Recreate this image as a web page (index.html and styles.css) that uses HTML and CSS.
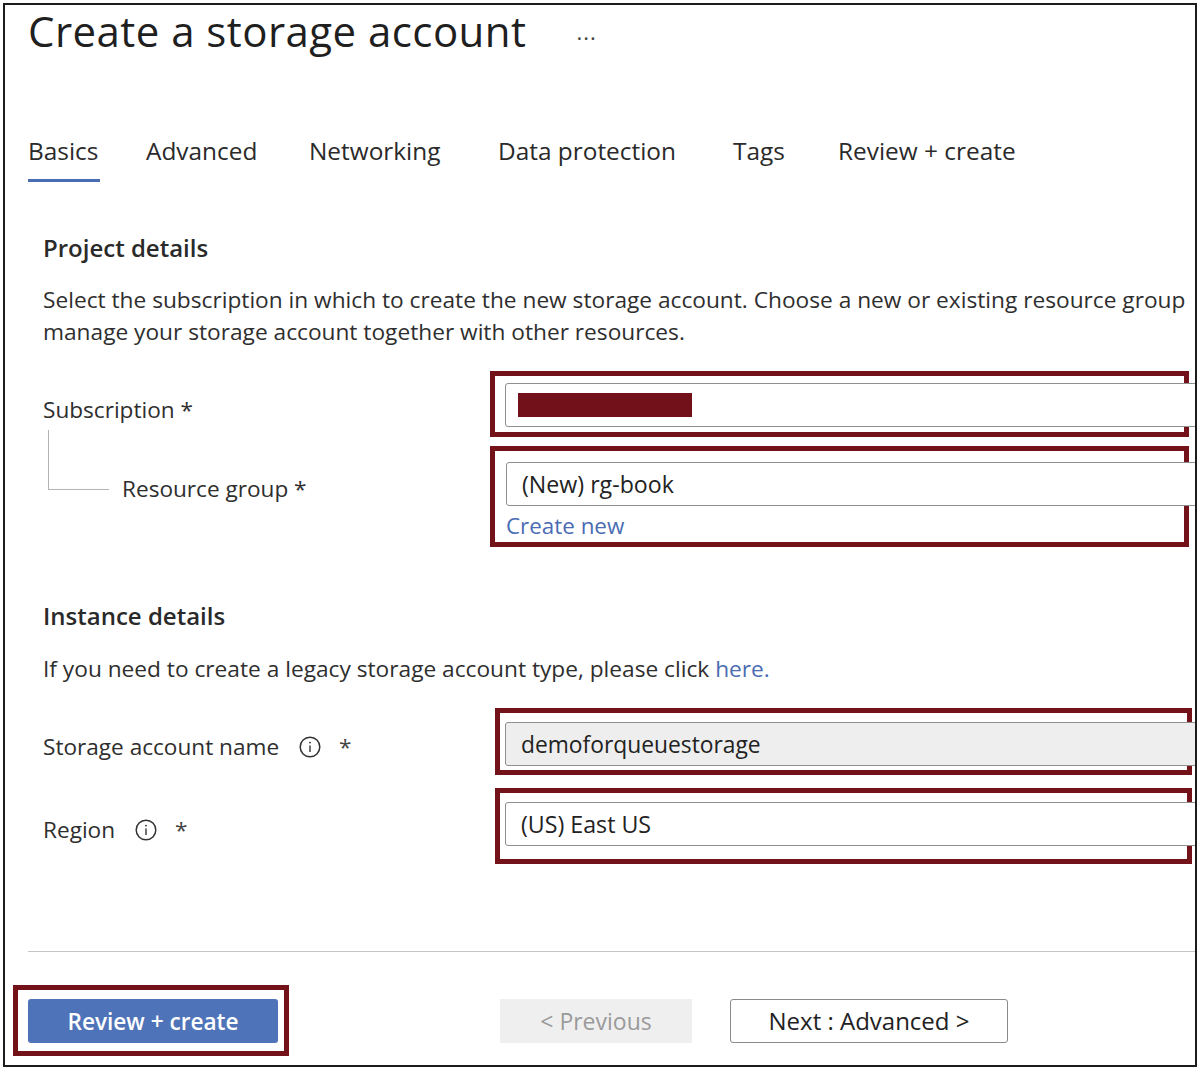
FILE: index.html
```html
<!DOCTYPE html>
<html lang="en">
<head>
<meta charset="utf-8">
<title>Create a storage account</title>
<link rel="stylesheet" href="styles.css">
</head>
<body>
<div class="frame">
  <header class="title-row">
    <h1 class="title">Create a storage account</h1>
    <span class="more">···</span>
  </header>

  <nav class="tabs">
    <span class="tab active"><span class="tab-text">Basics</span></span>
    <span class="tab"><span class="tab-text">Advanced</span></span>
    <span class="tab"><span class="tab-text">Networking</span></span>
    <span class="tab"><span class="tab-text">Data protection</span></span>
    <span class="tab"><span class="tab-text">Tags</span></span>
    <span class="tab"><span class="tab-text">Review + create</span></span>
  </nav>

  <section class="section">
    <h2 class="heading heading-project">Project details</h2>
    <p class="desc">Select the subscription in which to create the new storage account. Choose a new or existing resource group<br>manage your storage account together with other resources.</p>

    <div class="row row-sub">
      <div class="label label-sub">Subscription *</div>
      <div class="hl hl-sub">
        <div class="input"><span class="redact"></span></div>
      </div>
    </div>

    <div class="row row-rg">
      <div class="label label-rg"><span class="connector"></span>Resource group *</div>
      <div class="hl hl-rg">
        <div class="input"><span class="value">(New) rg-book</span></div>
        <a class="link create-new">Create new</a>
      </div>
    </div>

    <h2 class="heading heading-instance">Instance details</h2>
    <p class="desc desc-instance">If you need to create a legacy storage account type, please click <a class="link">here.</a></p>

    <div class="row row-name">
      <div class="label label-name">Storage account name<svg class="info" viewBox="0 0 22 22" width="22" height="22" aria-hidden="true"><circle cx="11" cy="11" r="9.8" fill="none" stroke="#333" stroke-width="1.5"/><line x1="11" y1="9.5" x2="11" y2="16" stroke="#333" stroke-width="1.4"/><circle cx="11" cy="6.6" r="0.95" fill="#333"/></svg><span class="req">*</span></div>
      <div class="hl hl-name">
        <div class="input input-disabled"><span class="value">demoforqueuestorage</span></div>
      </div>
    </div>

    <div class="row row-region">
      <div class="label label-region">Region<svg class="info" viewBox="0 0 22 22" width="22" height="22" aria-hidden="true"><circle cx="11" cy="11" r="9.8" fill="none" stroke="#333" stroke-width="1.5"/><line x1="11" y1="9.5" x2="11" y2="16" stroke="#333" stroke-width="1.4"/><circle cx="11" cy="6.6" r="0.95" fill="#333"/></svg><span class="req">*</span></div>
      <div class="hl hl-region">
        <div class="input"><span class="value">(US) East US</span></div>
      </div>
    </div>
  </section>

  <footer class="footer">
    <div class="divider"></div>
    <div class="actions">
      <div class="hl-btn"><button class="btn btn-primary">Review + create</button></div>
      <button class="btn btn-disabled">&lt; Previous</button>
      <button class="btn btn-secondary">Next : Advanced &gt;</button>
    </div>
  </footer>
</div>
</body>
</html>
```

FILE: styles.css
```css
* { box-sizing: border-box; }

html, body {
  margin: 0;
  padding: 0;
  background: #ffffff;
}

body {
  font-family: "Open Sans", "Noto Sans", "DejaVu Sans", sans-serif;
  color: #262626;
}

.frame {
  margin: 3px 0 0 3px;
  width: 1194px;
  height: 1064px;
  border: 2px solid #1c1c1c;
  overflow: hidden;
  background: #fff;
}

/* Title */
.title-row {
  display: flex;
  align-items: flex-start;
  padding: 1px 0 0 23px;
  height: 51px;
}

.title {
  margin: 0;
  font-size: 42px;
  line-height: 50px;
  font-weight: 400;
  letter-spacing: 0.45px;
  color: #1f1f1f;
}

.more {
  margin-left: 50px;
  padding-top: 6px;
  font-size: 22px;
  line-height: 50px;
  color: #444;
  letter-spacing: 1px;
}

/* Tabs */
.tabs {
  display: grid;
  grid-template-columns: 118px 163px 189px 235px 105px auto;
  margin-top: 79px;
  padding-left: 23px;
  font-size: 24.4px;
  line-height: 32px;
  color: #2a2a2a;
}

.tab-text {
  display: inline-block;
  padding-bottom: 12px;
  border-bottom: 3px solid transparent;
}

.tab.active .tab-text {
  border-bottom-color: #4a6cb3;
  padding-right: 2px;
}

/* Section */
.section {
  padding-left: 38px;
}

.heading {
  margin: 0;
  font-size: 24px;
  line-height: 32px;
  font-weight: 600;
  color: #2a2a2a;
}

.heading-project { margin-top: 50px; }
.heading-instance { margin-top: 53px; }

.desc {
  margin: 20px 0 0;
  font-size: 22.7px;
  line-height: 32px;
  color: #2e2e2e;
  white-space: nowrap;
}

.desc-instance { margin-top: 21px; }

.link {
  color: #4a6cb3;
  text-decoration: none;
}

/* Rows */
.row {
  display: grid;
  grid-template-columns: 447px 1fr;
  align-items: start;
}

.row-sub { margin-top: 23px; }
.row-rg { margin-top: 9px; }
.row-name { margin-top: 23px; }
.row-region { margin-top: 13px; }

.label {
  display: flex;
  align-items: center;
  font-size: 22.6px;
  line-height: 32px;
  color: #2e2e2e;
  white-space: nowrap;
}

.label-sub { margin-top: 23px; }
.label-rg { margin-top: 27px; padding-left: 79px; position: relative; }
.label-name { margin-top: 23px; }
.label-region { margin-top: 26px; }

.connector {
  position: absolute;
  left: 5px;
  top: -43px;
  width: 61px;
  height: 60px;
  border-left: 1px solid #b4b4b4;
  border-bottom: 1px solid #b4b4b4;
}

.info {
  display: block;
  flex: none;
  margin: 0 18px 0 20px;
}

.req { color: #444; }

/* Highlight boxes (annotation) */
.hl {
  width: 699px;
  border: 5px solid #731219;
}

.hl-sub { padding: 7px 0 5px 10px; }
.hl-rg { padding: 11px 0 0 11px; }
.hl-name { margin-left: 5px; width: 697px; padding: 9px 0 4px 5px; }
.hl-region { margin-left: 5px; width: 697px; padding: 9px 0 13px 5px; }

.input {
  width: 720px;
  height: 44px;
  border: 1px solid #8f8f8f;
  border-radius: 3px;
  background: #fff;
  display: flex;
  align-items: center;
  padding-left: 15px;
  font-size: 23.2px;
  color: #222;
}

.hl-sub .input { padding-left: 12px; }

.input-disabled {
  background: #eeeeee;
  font-size: 22.8px;
}

.redact {
  display: block;
  width: 174px;
  height: 24px;
  background: #72111a;
}

.create-new {
  display: block;
  margin-top: 4px;
  font-size: 22.4px;
  line-height: 32px;
}

/* Footer */
.footer {
  margin-top: 87px;
}

.divider {
  margin-left: 23px;
  height: 1px;
  background: #c4c4c4;
}

.actions {
  display: flex;
  align-items: center;
  margin-top: 33px;
  padding-left: 8px;
}

.hl-btn {
  border: 5px solid #731219;
  padding: 9px 6px 8px 10px;
}

.btn {
  font-family: inherit;
  font-size: 23px;
  height: 44px;
  border-radius: 3px;
  margin: 0;
  cursor: default;
}

.btn-primary {
  width: 250px;
  background: #4e73b8;
  color: #fff;
  border: none;
  font-weight: 600;
  font-size: 22.6px;
}

.btn-disabled {
  margin-left: 211px;
  width: 192px;
  background: #efefef;
  color: #9a9a9a;
  border: none;
  border-radius: 0;
}

.btn-secondary {
  margin-left: 38px;
  width: 278px;
  background: #fff;
  color: #222;
  border: 1px solid #8a8a8a;
  font-size: 24px;
}
```
